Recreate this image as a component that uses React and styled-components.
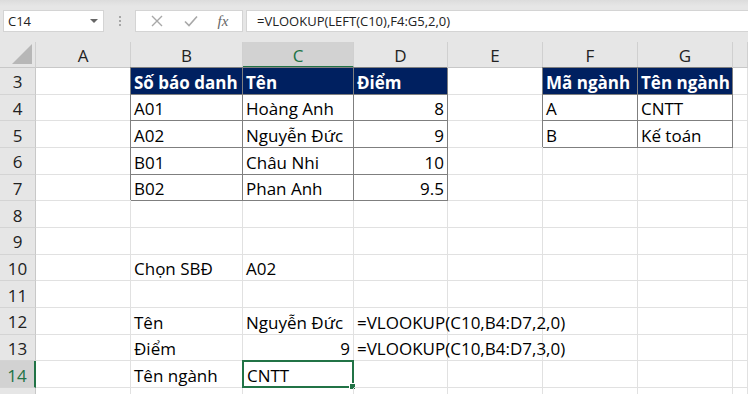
import React from "react";
import styled, { createGlobalStyle, css } from "styled-components";

const Global = createGlobalStyle`
  html, body { margin: 0; padding: 0; background: #fff; }
  body { width: 748px; height: 394px; overflow: hidden; }
`;

const FONT = `"Open Sans", "Noto Sans", sans-serif`;
const GREEN = "#217346";
const NAVY = "#002060";
const GRID = "#e1e1e1";
const DARK = "#7f7f7f";

const Page = styled.div`
  width: 748px;
  height: 394px;
  overflow: hidden;
  display: flex;
  flex-direction: column;
  font-family: ${FONT};
`;

const Toolbar = styled.div`
  height: 42px;
  flex: none;
  background: linear-gradient(#dcdcdc 0px, #e6e6e6 6px, #e6e6e6 100%);
  display: flex;
  align-items: center;
  padding: 0 0 0 3px;
  box-sizing: border-box;
`;

const NameBox = styled.div`
  width: 101px;
  height: 22px;
  box-sizing: border-box;
  background: #fff;
  border: 1px solid #d4d4d4;
  display: flex;
  align-items: center;
  justify-content: space-between;
  padding: 0 5px 0 4px;
  font-size: 13px;
  color: #222;
`;

const Caret = styled.span`
  width: 0;
  height: 0;
  border-left: 4px solid transparent;
  border-right: 4px solid transparent;
  border-top: 4px solid #666;
`;

const Dots = styled.div`
  width: 31px;
  display: flex;
  flex-direction: column;
  align-items: center;
  gap: 2px;
  & > span { width: 2px; height: 2px; background: #a6a6a6; }
`;

const FxBox = styled.div`
  width: 108px;
  height: 22px;
  box-sizing: border-box;
  background: #fff;
  border: 1px solid #d4d4d4;
  display: flex;
  align-items: center;
  justify-content: space-around;
  padding: 0 4px;
`;

const FxText = styled.span`
  font-family: "Liberation Serif", serif;
  font-style: italic;
  font-size: 15px;
  color: #666;
`;

const FormulaInput = styled.div`
  flex: 1;
  margin-left: 3px;
  height: 22px;
  box-sizing: border-box;
  background: #fff;
  border: 1px solid #d4d4d4;
  border-right: none;
  display: flex;
  align-items: center;
  padding-left: 10px;
  font-size: 13px;
  color: #222;
`;

const Sheet = styled.div`
  display: grid;
  grid-template-columns: 36px 95px 112px 111px 94px 95px 95px 95px 15px;
  grid-template-rows: 26px repeat(13, 26.6667px);
`;

const ColHead = styled.div`
  background: ${(p) => (p.$sel ? "#d2d2d2" : "#e6e6e6")};
  color: ${(p) => (p.$sel ? GREEN : "#222")};
  border-right: 1px solid #d0d0d0;
  border-bottom: ${(p) => (p.$sel ? `2px solid ${GREEN}` : "1px solid #c8c8c8")};
  box-sizing: border-box;
  display: flex;
  align-items: center;
  justify-content: center;
  font-size: 17px;
  padding-top: 2px;
`;

const Corner = styled.div`
  background: #e6e6e6;
  border-right: 1px solid #d0d0d0;
  border-bottom: 1px solid #c8c8c8;
  box-sizing: border-box;
  position: relative;
  &::after {
    content: "";
    position: absolute;
    right: 3px;
    bottom: 3px;
    width: 0;
    height: 0;
    border-left: 20px solid transparent;
    border-bottom: 20px solid #b7b7b7;
  }
`;

const RowHead = styled.div`
  background: ${(p) => (p.$sel ? "#d2d2d2" : "#e6e6e6")};
  color: ${(p) => (p.$sel ? GREEN : "#222")};
  border-right: ${(p) => (p.$sel ? `2px solid ${GREEN}` : "1px solid #c8c8c8")};
  border-bottom: 1px solid #d4d4d4;
  box-sizing: border-box;
  display: flex;
  align-items: center;
  justify-content: center;
  font-size: 17px;
  padding-top: 2px;
`;

const Cell = styled.div`
  box-sizing: border-box;
  border-right: 1px solid ${GRID};
  border-bottom: 1px solid ${GRID};
  display: flex;
  align-items: center;
  justify-content: ${(p) => (p.$right ? "flex-end" : "flex-start")};
  padding: 3px 3px 0 3px;
  font-size: 17px;
  color: #000;
  white-space: nowrap;
  overflow: visible;
  position: relative;
  ${(p) =>
    p.$boxed &&
    css`
      border-right-color: ${DARK};
      border-bottom-color: ${DARK};
      box-shadow: -1px -1px 0 0 ${DARK};
    `}
  ${(p) =>
    p.$head &&
    css`
      background: ${NAVY};
      color: #fff;
      font-weight: 700;
      border-right-color: ${DARK};
      border-bottom-color: ${DARK};
      box-shadow: -1px -1px 0 0 ${DARK};
    `}
  ${(p) =>
    p.$active &&
    css`
      border: 2px solid ${GREEN};
      margin: -1px 0 0 -1px;
      padding-left: 3px;
      &::after {
        content: "";
        position: absolute;
        right: -4px;
        bottom: -4px;
        width: 5px;
        height: 5px;
        background: ${GREEN};
        border: 1px solid #fff;
      }
    `}
`;

const Overflow = styled.span`
  position: relative;
  z-index: 2;
`;

const cols = ["A", "B", "C", "D", "E", "F", "G", ""];

const data = {
  3: { B: ["Số báo danh", "head"], C: ["Tên", "head"], D: ["Điểm", "head"], F: ["Mã ngành", "head"], G: ["Tên ngành", "head"] },
  4: { B: ["A01", "box"], C: ["Hoàng Anh", "box"], D: ["8", "boxR"], F: ["A", "box"], G: ["CNTT", "box"] },
  5: { B: ["A02", "box"], C: ["Nguyễn Đức", "box"], D: ["9", "boxR"], F: ["B", "box"], G: ["Kế toán", "box"] },
  6: { B: ["B01", "box"], C: ["Châu Nhi", "box"], D: ["10", "boxR"] },
  7: { B: ["B02", "box"], C: ["Phan Anh", "box"], D: ["9.5", "boxR"] },
  10: { B: ["Chọn SBĐ"], C: ["A02"] },
  12: { B: ["Tên"], C: ["Nguyễn Đức"], D: ["=VLOOKUP(C10,B4:D7,2,0)", "over"] },
  13: { B: ["Điểm"], C: ["9", "right"], D: ["=VLOOKUP(C10,B4:D7,3,0)", "over"] },
  14: { B: ["Tên ngành"], C: ["CNTT", "active"] },
};

export default function App() {
  const rows = [];
  for (let r = 3; r <= 15; r++) rows.push(r);
  return (
    <>
      <Global />
      <Page>
        <Toolbar>
          <NameBox>
            C14
            <Caret />
          </NameBox>
          <Dots>
            <span />
            <span />
            <span />
          </Dots>
          <FxBox>
            <svg width="14" height="14" viewBox="0 0 14 14">
              <path d="M2 2 L12 12 M12 2 L2 12" stroke="#a8a8a8" strokeWidth="1.4" fill="none" />
            </svg>
            <svg width="16" height="14" viewBox="0 0 16 14">
              <path d="M2 7.5 L6 11.5 L14 2.5" stroke="#a8a8a8" strokeWidth="1.6" fill="none" />
            </svg>
            <FxText>fx</FxText>
          </FxBox>
          <FormulaInput>=VLOOKUP(LEFT(C10),F4:G5,2,0)</FormulaInput>
        </Toolbar>
        <Sheet>
          <Corner />
          {cols.map((c, i) => (
            <ColHead key={i} $sel={c === "C"}>
              {c}
            </ColHead>
          ))}
          {rows.map((r) => (
            <React.Fragment key={r}>
              <RowHead $sel={r === 14}>{r < 15 ? r : null}</RowHead>
              {cols.map((c, i) => {
                const d = data[r] && data[r][c];
                const kind = d ? d[1] : undefined;
                return (
                  <Cell
                    key={i}
                    $head={kind === "head"}
                    $boxed={kind === "box" || kind === "boxR"}
                    $right={kind === "boxR" || kind === "right"}
                    $active={kind === "active"}
                  >
                    {d ? kind === "over" ? <Overflow>{d[0]}</Overflow> : d[0] : null}
                  </Cell>
                );
              })}
            </React.Fragment>
          ))}
        </Sheet>
      </Page>
    </>
  );
}
